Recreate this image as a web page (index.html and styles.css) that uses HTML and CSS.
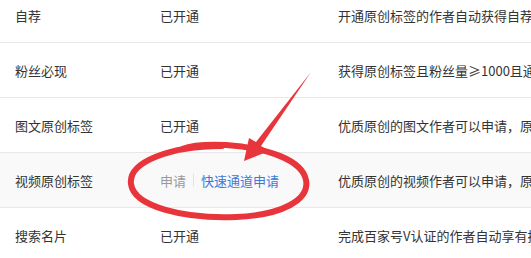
FILE: index.html
```html
<!DOCTYPE html>
<html lang="zh">
<head>
<meta charset="utf-8">
<link rel="stylesheet" href="styles.css">
</head>
<body>
<div class="page">
  <div class="table">
    <div class="row">
      <div class="c1">自荐</div>
      <div class="c2">已开通</div>
      <div class="c3">开通原创标签的作者自动获得自荐功能</div>
    </div>
    <div class="row">
      <div class="c1">粉丝必现</div>
      <div class="c2">已开通</div>
      <div class="c3">获得原创标签且粉丝量≥1000且通过审核</div>
    </div>
    <div class="row">
      <div class="c1">图文原创标签</div>
      <div class="c2">已开通</div>
      <div class="c3">优质原创的图文作者可以申请，原创标签</div>
    </div>
    <div class="row hl">
      <div class="c1">视频原创标签</div>
      <div class="c2"><span class="muted">申请</span><span class="sep"></span><span class="link">快速通道申请</span></div>
      <div class="c3">优质原创的视频作者可以申请，原创标签</div>
    </div>
    <div class="row">
      <div class="c1">搜索名片</div>
      <div class="c2">已开通</div>
      <div class="c3">完成百家号V认证的作者自动享有搜索名片</div>
    </div>
  </div>
  <svg class="mark" width="531" height="258" viewBox="0 0 531 258">
    <path d="M222 146 C 170 146, 128 162, 131 184 C 134 207, 185 219, 236 217 C 282 215, 310 200, 306 180 C 302 160, 268 148, 226 145 C 205 144, 190 146, 182 149" fill="none" stroke="#e8353b" stroke-width="6" stroke-linecap="round"/>
    <path d="M311 72 L 261 146 L 269 151 L 244 161 L 249 138 L 256 142 Z" fill="#e8353b"/>
  </svg>
</div>
</body>
</html>
```
FILE: styles.css
```css
html, body {
  margin: 0;
  padding: 0;
  background: #fff;
}
.page {
  position: relative;
  width: 531px;
  height: 258px;
  overflow: hidden;
  font-family: "Noto Sans CJK SC", "Noto Sans", sans-serif;
  font-size: 13px;
  color: #333;
}
.table {
  margin-top: -12px;
}
.row {
  display: flex;
  align-items: center;
  height: 54px;
  border-bottom: 1px solid #e8e8e8;
  white-space: nowrap;
}
.row.hl {
  background: #f9f9f9;
}
.c1 {
  width: 145px;
  padding-left: 15px;
  flex: none;
}
.c2 {
  width: 178px;
  flex: none;
  display: flex;
  align-items: center;
}
.c3 {
  flex: 1;
  overflow: hidden;
}
.muted {
  color: #999;
}
.sep {
  display: inline-block;
  width: 1px;
  height: 12px;
  background: #e2e2e2;
  margin: 0 7px;
}
.link {
  color: #3f78d6;
}
.mark {
  position: absolute;
  left: 0;
  top: 0;
  pointer-events: none;
}
```
